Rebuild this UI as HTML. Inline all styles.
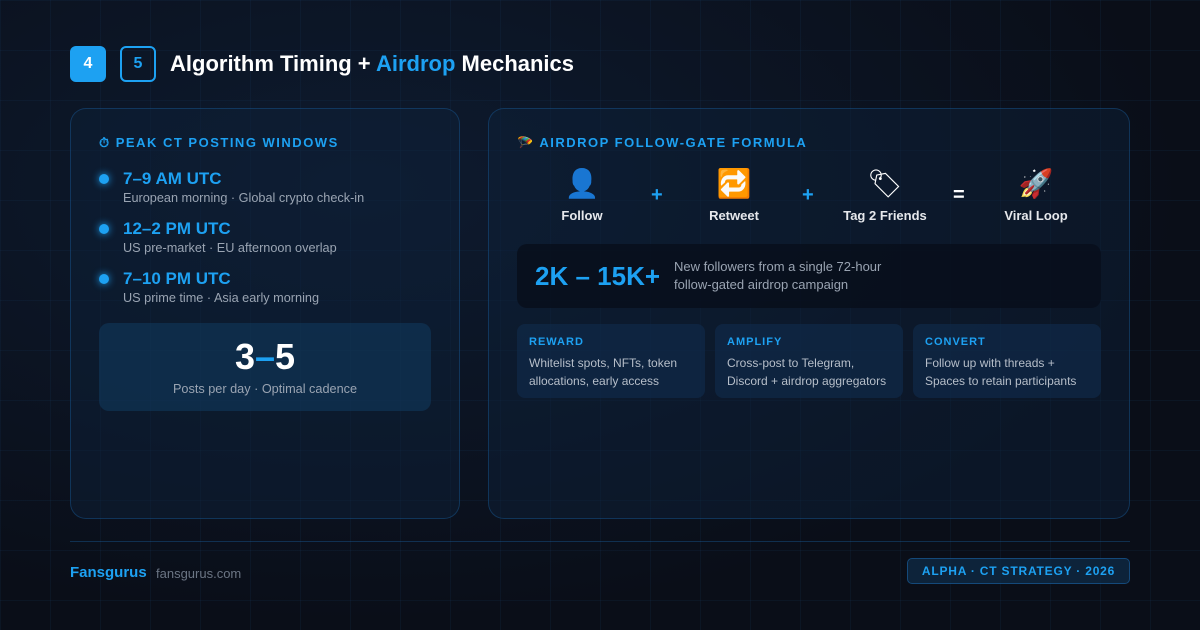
<!DOCTYPE html>
<html><head><meta charset="utf-8"><style>
*{margin:0;padding:0;box-sizing:border-box}
body{width:1200px;height:630px;overflow:hidden;font-family:"Liberation Sans",sans-serif;background:#0a0e18;position:relative;color:#fff}
.grid{position:absolute;inset:0;background-image:linear-gradient(rgba(40,110,180,0.08) 1px,transparent 1px),linear-gradient(90deg,rgba(40,110,180,0.08) 1px,transparent 1px);background-size:50px 50px;background-position:0 0}
.glow{position:absolute;inset:0;background:radial-gradient(ellipse at 30% 30%,rgba(20,50,90,0.35),transparent 70%)}
.abs{position:absolute}
.b4{left:70px;top:46px;width:36px;height:36px;border-radius:6px;background:#1da1f2;font-weight:bold;font-size:16px;display:flex;align-items:center;justify-content:center}
.b5{left:120px;top:46px;width:36px;height:36px;border-radius:6px;border:2px solid #1da1f2;color:#1da1f2;font-weight:bold;font-size:16px;display:flex;align-items:center;justify-content:center}
.title{left:170px;top:50px;font-size:22px;font-weight:bold;line-height:28px}
.card{border:1px solid rgba(30,110,180,0.35);border-radius:16px;background:rgba(14,34,58,0.45)}
.lab{font-size:13px;font-weight:bold;letter-spacing:1.5px;color:#1da1f2}
.dot{width:10px;height:10px;border-radius:50%;background:#1da1f2;box-shadow:0 0 8px #1da1f2}
.t{font-size:17px;font-weight:bold;color:#1da1f2}
.s{font-size:12.7px;color:#9aa4b2}
.ico{font-size:28px;text-align:center;width:120px;line-height:34px}
.il{font-size:13px;font-weight:bold;color:#e6e8ec;width:120px;text-align:center}
.op{font-size:20px;font-weight:bold;color:#1da1f2}
.sm{background:rgba(16,42,72,0.7);border-radius:8px;width:188px;height:74px;padding:12px 12px}
.sm b{display:block;font-size:11px;letter-spacing:1px;color:#1da1f2;margin-bottom:6px}
.sm p{font-size:12px;color:#b6bec9;line-height:18px}
</style></head><body>
<div class="grid"></div><div class="glow"></div>
<div class="abs b4">4</div><div class="abs b5">5</div>
<div class="abs title">Algorithm Timing + <span style="color:#1da1f2">Airdrop</span> Mechanics</div>

<div class="abs card" style="left:70px;top:108px;width:390px;height:411px"></div>
<div class="abs lab" style="left:99px;top:135px">⏱ PEAK CT POSTING WINDOWS</div>
<div class="abs dot" style="left:99px;top:174px"></div>
<div class="abs t" style="left:123px;top:169px">7–9 AM UTC</div>
<div class="abs s" style="left:123px;top:191px">European morning · Global crypto check-in</div>
<div class="abs dot" style="left:99px;top:224px"></div>
<div class="abs t" style="left:123px;top:219px">12–2 PM UTC</div>
<div class="abs s" style="left:123px;top:241px">US pre-market · EU afternoon overlap</div>
<div class="abs dot" style="left:99px;top:274px"></div>
<div class="abs t" style="left:123px;top:269px">7–10 PM UTC</div>
<div class="abs s" style="left:123px;top:291px">US prime time · Asia early morning</div>
<div class="abs" style="left:99px;top:323px;width:332px;height:88px;border-radius:10px;background:rgba(16,56,92,0.6)"></div>
<div class="abs" style="left:99px;top:336px;width:332px;text-align:center;font-size:36px;font-weight:bold;line-height:42px">3<span style="color:#1da1f2">–</span>5</div>
<div class="abs s" style="left:99px;top:382px;width:332px;text-align:center">Posts per day · Optimal cadence</div>

<div class="abs card" style="left:488px;top:108px;width:642px;height:411px"></div>
<div class="abs lab" style="left:517px;top:135px">🪂 AIRDROP FOLLOW-GATE FORMULA</div>
<div class="abs ico" style="left:522px;top:167px">👤</div><div class="abs il" style="left:522px;top:208px">Follow</div>
<div class="abs op" style="left:651px;top:184px">+</div>
<div class="abs ico" style="left:674px;top:167px">🔁</div><div class="abs il" style="left:674px;top:208px">Retweet</div>
<div class="abs op" style="left:802px;top:184px">+</div>
<div class="abs ico" style="left:825px;top:167px">🏷</div><div class="abs il" style="left:825px;top:208px;width:120px">Tag 2 Friends</div>
<div class="abs op" style="left:953px;top:184px;color:#fff">=</div>
<div class="abs ico" style="left:976px;top:167px">🚀</div><div class="abs il" style="left:976px;top:208px">Viral Loop</div>

<div class="abs" style="left:517px;top:244px;width:584px;height:64px;border-radius:10px;background:rgba(8,14,26,0.8)"></div>
<div class="abs" style="left:535px;top:261px;font-size:26px;font-weight:bold;color:#1da1f2;line-height:30px">2K – 15K+</div>
<div class="abs" style="left:674px;top:258px;font-size:13px;color:#9aa4b2;line-height:18px">New followers from a single 72-hour<br>follow-gated airdrop campaign</div>

<div class="abs sm" style="left:517px;top:324px"><b>REWARD</b><p>Whitelist spots, NFTs, token allocations, early access</p></div>
<div class="abs sm" style="left:715px;top:324px"><b>AMPLIFY</b><p>Cross-post to Telegram, Discord + airdrop aggregators</p></div>
<div class="abs sm" style="left:913px;top:324px"><b>CONVERT</b><p>Follow up with threads + Spaces to retain participants</p></div>

<div class="abs" style="left:70px;top:541px;width:1060px;height:1px;background:rgba(30,110,180,0.35)"></div>
<div class="abs" style="left:70px;top:564px;font-size:15px;font-weight:bold;color:#1da1f2">Fansgurus</div>
<div class="abs" style="left:156px;top:566px;font-size:13px;color:#6b7584">fansgurus.com</div>
<div class="abs" style="left:907px;top:558px;width:223px;height:26px;border:1px solid rgba(30,120,200,0.45);border-radius:5px;background:rgba(14,44,72,0.7);font-size:12px;font-weight:bold;letter-spacing:0.8px;color:#1da1f2;display:flex;align-items:center;justify-content:center">ALPHA · CT STRATEGY · 2026</div>
</body></html>
